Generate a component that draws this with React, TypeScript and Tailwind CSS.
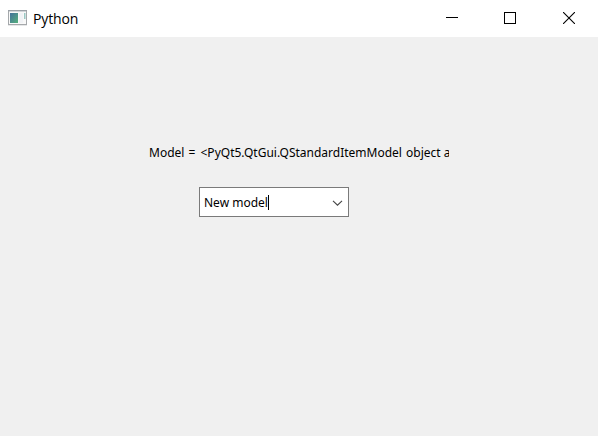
import React from 'react';

function AppIcon() {
  return (
    <svg width="19" height="16" viewBox="0 0 19 16" className="shrink-0">
      <defs>
        <linearGradient id="screen" x1="0" y1="0" x2="1" y2="1">
          <stop offset="0" stopColor="#42709b" />
          <stop offset="1" stopColor="#55b07c" />
        </linearGradient>
      </defs>
      <rect x="0.5" y="0.5" width="18" height="14" fill="#f8f8f8" stroke="#a5a8ab" />
      <path d="M0 0.5h19" stroke="#9aa0a6" />
      <path d="M1 1.5h17" stroke="#d0d4d8" />
      <path d="M0 15.5h19" stroke="#e6e7e8" />
      <rect x="2" y="3" width="8" height="10" fill="url(#screen)" />
      <rect x="11" y="3" width="4" height="10" fill="#f0f2f5" />
      <rect x="16" y="3" width="1.5" height="6" fill="#9ac8c4" />
    </svg>
  );
}

function TitleBar() {
  return (
    <header className="flex h-[37px] items-start bg-white pl-2">
      <div className="flex h-9 items-center">
        <AppIcon />
        <h1 className="ml-[6px] mt-[2px] whitespace-nowrap font-['Open_Sans',sans-serif] text-[14px] leading-5 tracking-[-0.15px] text-black">
          Python
        </h1>
      </div>
      <div className="ml-auto flex">
        <button aria-label="Minimize" className="flex h-9 w-[58px] items-center justify-center">
          <svg width="12" height="12" shapeRendering="crispEdges">
            <path d="M0 5.5h12" stroke="#000" />
          </svg>
        </button>
        <button aria-label="Maximize" className="flex h-9 w-[58px] items-center justify-center">
          <svg width="12" height="12" shapeRendering="crispEdges">
            <rect x="0.5" y="0.5" width="11" height="11" fill="none" stroke="#000" />
          </svg>
        </button>
        <button aria-label="Close" className="flex h-9 w-[59px] items-center justify-center">
          <svg width="12" height="12">
            <path d="M0 0L12 12M12 0L0 12" stroke="#000" strokeWidth="1.1" />
          </svg>
        </button>
      </div>
    </header>
  );
}

export default function App() {
  return (
    <div className="h-[436px] w-[598px] overflow-hidden bg-[#f0f0f0] font-['Noto_Sans',sans-serif] text-[12px] text-black">
      <TitleBar />
      <main className="flex w-[598px] flex-col pl-[149px] pt-[101px]">
        <p className="h-[30px] w-[300px] overflow-hidden whitespace-nowrap leading-[30px]">
          Model <span className="mr-[2px] pl-[1px]">=</span> &lt;PyQt5.QtGui.QStandardItemModel{' '}
          <span className="ml-[1px]">object</span> a
        </p>
        <div className="ml-[50px] mt-[19px] flex h-[30px] w-[150px] items-center border border-[#7a7a7a] bg-white pl-1 pr-[5px]">
          <span className="mt-[2px] whitespace-nowrap leading-7">New model</span>
          <span className="h-[15px] w-px bg-black" />
          <svg width="11" height="7" viewBox="0 0 11 7" className="ml-auto mt-[2px]">
            <path d="M1 0.8L5.5 5.2L10 0.8" fill="none" stroke="#444" strokeWidth="1.1" />
          </svg>
        </div>
      </main>
    </div>
  );
}
